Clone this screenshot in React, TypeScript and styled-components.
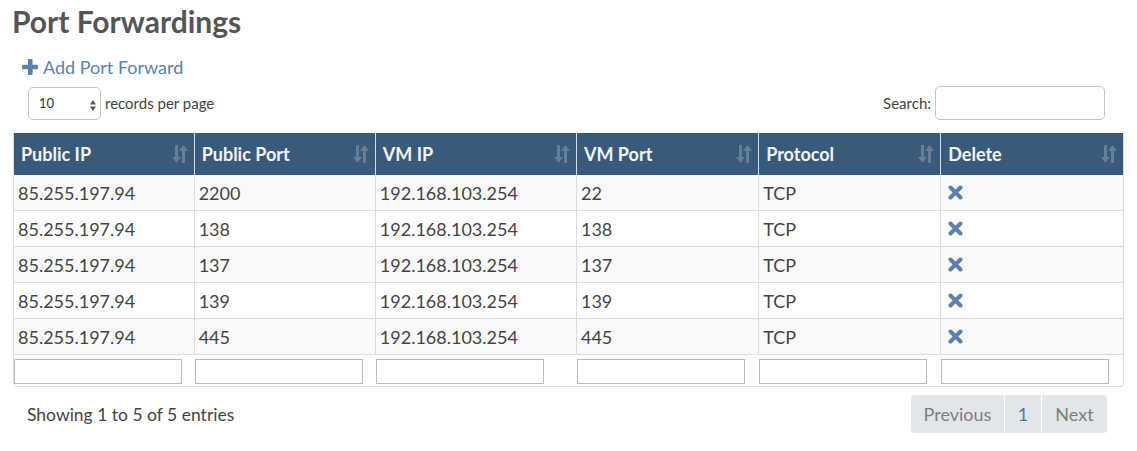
import React from 'react';
import styled, { createGlobalStyle } from 'styled-components';

const GlobalStyle = createGlobalStyle`
  body {
    margin: 0;
    background: #fff;
    font-family: Lato, "Open Sans", sans-serif;
    color: #444;
  }
`;

const Page = styled.div`
  width: 1137px;
  padding: 0 0 0 12px;
  box-sizing: border-box;
`;

const Title = styled.h1`
  font-size: 30px;
  line-height: 36px;
  font-weight: 700;
  color: #555;
  margin: 3px 0 0 0;
`;

const AddLink = styled.a`
  display: flex;
  align-items: center;
  gap: 5px;
  margin: 17px 0 0 10px;
  font-size: 18px;
  line-height: 22px;
  color: #5a82b0;
  text-decoration: none;
`;

const Toolbar = styled.div`
  display: flex;
  justify-content: space-between;
  align-items: center;
  width: 1077px;
  margin-top: 8px;
  padding-left: 16px;
`;

const LengthLabel = styled.label`
  display: flex;
  align-items: center;
  gap: 4px;
  font-size: 15px;
  color: #444;
`;

const SelectBox = styled.div`
  position: relative;
  width: 73px;
  height: 33px;
  border: 1px solid #c4c4c4;
  border-radius: 5px;
  box-sizing: border-box;
  display: flex;
  align-items: center;
  padding-left: 10px;
  font-size: 13px;
  color: #333;
`;

const Spinner = styled.span`
  position: absolute;
  right: 4px;
  top: 10px;
`;

const SearchInput = styled.div`
  width: 170px;
  height: 34px;
  border: 1px solid #c4c4c4;
  border-radius: 5px;
  box-sizing: border-box;
`;

const TableWrap = styled.div`
  width: 1109px;
  margin: 13px 0 0 1px;
  border: 1px solid #ddd;
  border-top: none;
  border-radius: 0 0 4px 4px;
  overflow: hidden;
`;

const Table = styled.table`
  width: 100%;
  border-collapse: collapse;
  table-layout: fixed;
`;

const Th = styled.th`
  background: #385b7b;
  color: #f4f4f4;
  text-align: left;
  font-size: 18px;
  font-weight: 700;
  height: 42px;
  padding: 0 7px;
  border-left: 1px solid #d8dde2;
  position: relative;
  &:first-child { border-left: none; }
`;

const SortIcon = styled.span`
  position: absolute;
  right: 6px;
  top: 12px;
`;

const Tr = styled.tr<{ $striped?: boolean }>`
  background: ${({ $striped }) => ($striped ? '#f9f9f9' : '#fff')};
  border-top: 1px solid #ddd;
  &:first-child { border-top: none; }
`;

const Td = styled.td`
  font-size: 18px;
  height: 35px;
  padding: 0 4px;
  border-left: 1px solid #ddd;
  color: #444;
  &:first-child { border-left: none; }
`;

const FilterTd = styled.td`
  padding: 4px 0 2px 0;
  border-left: 1px solid transparent;
  &:first-child { border-left: none; }
`;

const FilterInput = styled.div`
  width: 168px;
  height: 25px;
  border: 1px solid #bbb;
  box-sizing: border-box;
`;

const Footer = styled.div`
  display: flex;
  justify-content: space-between;
  align-items: center;
  width: 1080px;
  margin-top: 8px;
  padding-left: 15px;
`;

const Info = styled.div`
  font-size: 17.5px;
  color: #444;
`;

const Pager = styled.div`
  display: flex;
  height: 38px;
  background: #e3e6e9;
  border-radius: 4px;
  overflow: hidden;
`;

const PageBtn = styled.span<{ $active?: boolean; $w: number }>`
  width: ${({ $w }) => $w}px;
  display: flex;
  align-items: center;
  justify-content: center;
  font-size: 18px;
  color: ${({ $active }) => ($active ? '#4b77a8' : '#7d7d7d')};
  border-left: 1px solid #fff;
  &:first-child { border-left: none; }
`;

const columns = [
  { name: 'Public IP', w: 180 },
  { name: 'Public Port', w: 181 },
  { name: 'VM IP', w: 201 },
  { name: 'VM Port', w: 182 },
  { name: 'Protocol', w: 182 },
  { name: 'Delete', w: 182 },
];

const rows = [
  ['85.255.197.94', '2200', '192.168.103.254', '22', 'TCP'],
  ['85.255.197.94', '138', '192.168.103.254', '138', 'TCP'],
  ['85.255.197.94', '137', '192.168.103.254', '137', 'TCP'],
  ['85.255.197.94', '139', '192.168.103.254', '139', 'TCP'],
  ['85.255.197.94', '445', '192.168.103.254', '445', 'TCP'],
];

const Sort = () => (
  <svg width="16" height="18" viewBox="0 0 16 18" fill="#647f97">
    <rect x="3" y="0" width="3" height="13" />
    <path d="M0 12h9l-4.5 6z" />
    <rect x="10" y="5" width="3" height="13" />
    <path d="M7 6h9l-4.5-6z" />
  </svg>
);

const Cross = () => (
  <svg width="15" height="15" viewBox="0 0 15 15">
    <path d="M2.5 2.5l10 10M12.5 2.5l-10 10" stroke="#5a82b0" strokeWidth="4" strokeLinecap="round" />
  </svg>
);

const Plus = () => (
  <svg width="16" height="16" viewBox="0 0 16 16" fill="#5a82b0">
    <rect x="6" y="0" width="4.5" height="16" rx="1" />
    <rect x="0" y="5.7" width="16" height="4.5" rx="1" />
  </svg>
);

const App = () => (
  <Page>
    <GlobalStyle />
    <Title>Port Forwardings</Title>
    <AddLink href="#"><Plus />Add Port Forward</AddLink>
    <Toolbar>
      <LengthLabel>
        <SelectBox>
          10
          <Spinner>
            <svg width="6" height="11" viewBox="0 0 6 11" fill="#555">
              <path d="M0 4.5h6L3 0zM0 6.5h6L3 11z" />
            </svg>
          </Spinner>
        </SelectBox>
        records per page
      </LengthLabel>
      <LengthLabel>
        Search:
        <SearchInput />
      </LengthLabel>
    </Toolbar>
    <TableWrap>
      <Table>
        <colgroup>
          {columns.map((c) => <col key={c.name} style={{ width: c.w }} />)}
        </colgroup>
        <thead>
          <tr>
            {columns.map((c) => (
              <Th key={c.name}>
                {c.name}
                <SortIcon><Sort /></SortIcon>
              </Th>
            ))}
          </tr>
        </thead>
        <tbody>
          {rows.map((r, i) => (
            <Tr key={i} $striped={i % 2 === 0}>
              {r.map((v, j) => <Td key={j}>{v}</Td>)}
              <Td><span style={{ marginLeft: 3 }}><Cross /></span></Td>
            </Tr>
          ))}
          <Tr>
            {columns.map((c) => (
              <FilterTd key={c.name}><FilterInput /></FilterTd>
            ))}
          </Tr>
        </tbody>
      </Table>
    </TableWrap>
    <Footer>
      <Info>Showing 1 to 5 of 5 entries</Info>
      <Pager>
        <PageBtn $w={93}>Previous</PageBtn>
        <PageBtn $w={36} $active>1</PageBtn>
        <PageBtn $w={65}>Next</PageBtn>
      </Pager>
    </Footer>
  </Page>
);

export default App;
